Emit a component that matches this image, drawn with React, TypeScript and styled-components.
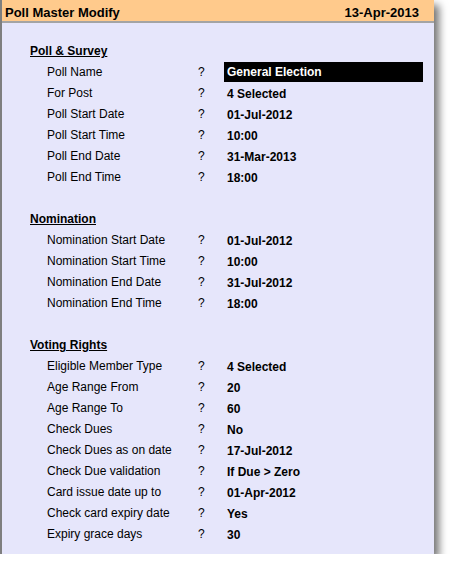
import { Fragment } from 'react';
import styled, { createGlobalStyle } from 'styled-components';

const GlobalStyle = createGlobalStyle`
  body {
    margin: 0;
    background: #ffffff;
    font-family: 'Liberation Sans', Arial, sans-serif;
  }
`;

const Panel = styled.div`
  width: 432px;
  height: 554px;
  background-color: #e6e6fb;
  border-left: 2px solid #7f7f7f;
  box-shadow: 5px 5px 8px rgb(0 0 0 / 0.55);
  display: flex;
  flex-direction: column;
`;

const Header = styled.div`
  box-sizing: border-box;
  height: 23px;
  background-color: #ffca8c;
  border-bottom: 2px solid #a4a4a4;
  display: flex;
  flex-direction: row;
  align-items: center;
  justify-content: space-between;
  padding: 3px 15px 0 3px;
  font-size: 13px;
  font-weight: bold;
  color: #000;
`;

const Body = styled.div`
  padding: 18px 0 0 28px;
  display: flex;
  flex-direction: column;
  gap: 21px;
`;

const Section = styled.div`
  display: grid;
  grid-template-columns: 17px 151px 26px 199px;
  grid-auto-rows: 21px;
  font-size: 12px;
  line-height: 21px;
  color: #000;
`;

const SectionTitle = styled.div`
  grid-column: 1 / -1;
  font-weight: bold;
  text-decoration: underline;
  text-underline-offset: 1px;
`;

const Label = styled.div`
  grid-column: 2;
  white-space: nowrap;
`;

const Query = styled.div`
  grid-column: 3;
`;

const Value = styled.div<{ $active?: boolean }>`
  grid-column: 4;
  font-weight: bold;
  padding-left: 3px;
  white-space: nowrap;
  height: 20px;
  line-height: 20px;
  margin-top: ${(p) => (p.$active ? '0' : '1px')};
  background-color: ${(p) => (p.$active ? '#000' : 'transparent')};
  color: ${(p) => (p.$active ? '#fff' : '#000')};
`;

type Field = [string, string];

const sections: { title: string; fields: Field[] }[] = [
  {
    title: 'Poll & Survey',
    fields: [
      ['Poll Name', 'General Election'],
      ['For Post', '4 Selected'],
      ['Poll Start Date', '01-Jul-2012'],
      ['Poll Start Time', '10:00'],
      ['Poll End Date', '31-Mar-2013'],
      ['Poll End Time', '18:00'],
    ],
  },
  {
    title: 'Nomination',
    fields: [
      ['Nomination Start Date', '01-Jul-2012'],
      ['Nomination Start Time', '10:00'],
      ['Nomination End Date', '31-Jul-2012'],
      ['Nomination End Time', '18:00'],
    ],
  },
  {
    title: 'Voting Rights',
    fields: [
      ['Eligible Member Type', '4 Selected'],
      ['Age Range From', '20'],
      ['Age Range To', '60'],
      ['Check Dues', 'No'],
      ['Check Dues as on date', '17-Jul-2012'],
      ['Check Due validation', 'If Due > Zero'],
      ['Card issue date up to', '01-Apr-2012'],
      ['Check card expiry date', 'Yes'],
      ['Expiry grace days', '30'],
    ],
  },
];

const App = () => (
  <>
    <GlobalStyle />
    <Panel>
      <Header>
        <span>Poll Master Modify</span>
        <span>13-Apr-2013</span>
      </Header>
      <Body>
        {sections.map((section, si) => (
          <Section key={section.title}>
            <SectionTitle>{section.title}</SectionTitle>
            {section.fields.map(([label, value], fi) => (
              <Fragment key={label}>
                <Label>{label}</Label>
                <Query>?</Query>
                <Value $active={si === 0 && fi === 0}>{value}</Value>
              </Fragment>
            ))}
          </Section>
        ))}
      </Body>
    </Panel>
  </>
);

export default App;
